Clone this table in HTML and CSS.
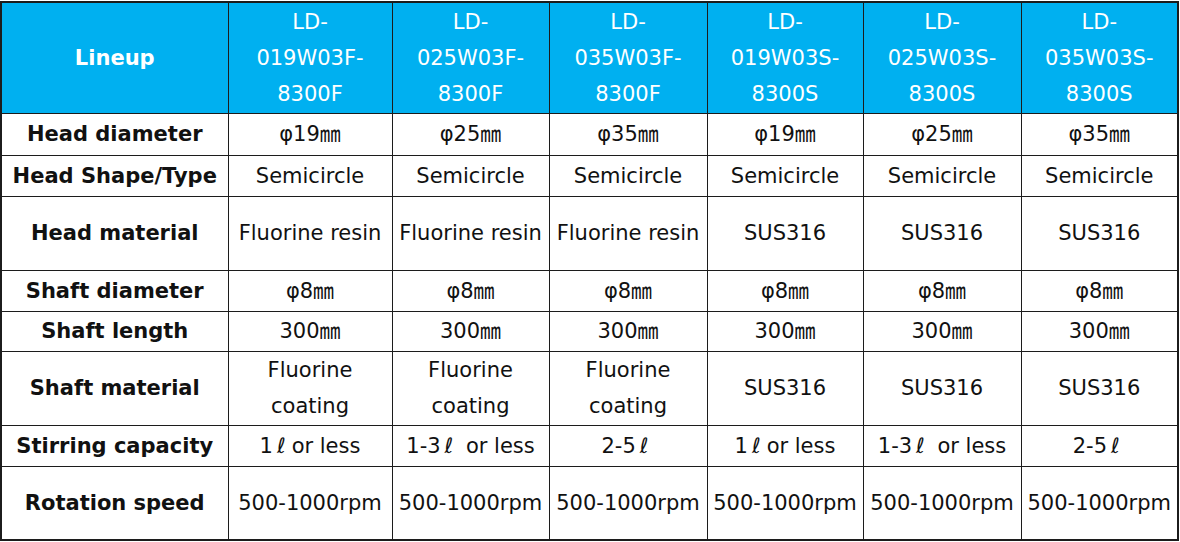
FILE: index.html
```
<!DOCTYPE html>
<html lang="en">
<head>
    <meta charset="UTF-8">
    <meta name="viewport" content="width=device-width, initial-scale=1.0">
    <title>Lineup</title>
    <link rel="stylesheet" href="styles.css">
</head>
<body>
    <table class="spec">
        <colgroup>
            <col class="c-label">
            <col class="c-1">
            <col class="c-2">
            <col class="c-3">
            <col class="c-4">
            <col class="c-5">
            <col class="c-6">
        </colgroup>
        <tr class="head">
            <th class="label">Lineup</th>
            <th>LD-<br>019W03F-<br>8300F</th>
            <th>LD-<br>025W03F-<br>8300F</th>
            <th>LD-<br>035W03F-<br>8300F</th>
            <th>LD-<br>019W03S-<br>8300S</th>
            <th>LD-<br>025W03S-<br>8300S</th>
            <th>LD-<br>035W03S-<br>8300S</th>
        </tr>
        <tr class="r-42">
            <td class="label">Head diameter</td>
            <td>φ19㎜</td>
            <td>φ25㎜</td>
            <td>φ35㎜</td>
            <td>φ19㎜</td>
            <td>φ25㎜</td>
            <td>φ35㎜</td>
        </tr>
        <tr class="r-41">
            <td class="label">Head Shape/Type</td>
            <td>Semicircle</td>
            <td>Semicircle</td>
            <td>Semicircle</td>
            <td>Semicircle</td>
            <td>Semicircle</td>
            <td>Semicircle</td>
        </tr>
        <tr class="r-74">
            <td class="label">Head material</td>
            <td>Fluorine resin</td>
            <td>Fluorine resin</td>
            <td>Fluorine resin</td>
            <td>SUS316</td>
            <td>SUS316</td>
            <td>SUS316</td>
        </tr>
        <tr class="r-41">
            <td class="label">Shaft diameter</td>
            <td>φ8㎜</td>
            <td>φ8㎜</td>
            <td>φ8㎜</td>
            <td>φ8㎜</td>
            <td>φ8㎜</td>
            <td>φ8㎜</td>
        </tr>
        <tr class="r-40">
            <td class="label">Shaft length</td>
            <td>300㎜</td>
            <td>300㎜</td>
            <td>300㎜</td>
            <td>300㎜</td>
            <td>300㎜</td>
            <td>300㎜</td>
        </tr>
        <tr class="r-74">
            <td class="label">Shaft material</td>
            <td>Fluorine<br>coating</td>
            <td>Fluorine<br>coating</td>
            <td>Fluorine<br>coating</td>
            <td>SUS316</td>
            <td>SUS316</td>
            <td>SUS316</td>
        </tr>
        <tr class="r-41">
            <td class="label">Stirring capacity</td>
            <td>1<span class="ltr">ℓ</span>or less</td>
            <td>1-3<span class="ltr">ℓ</span>&nbsp;or less</td>
            <td>2-5<span class="ltr">ℓ</span></td>
            <td>1<span class="ltr">ℓ</span>or less</td>
            <td>1-3<span class="ltr">ℓ</span>&nbsp;or less</td>
            <td>2-5<span class="ltr">ℓ</span></td>
        </tr>
        <tr class="r-74">
            <td class="label">Rotation speed</td>
            <td>500-1000rpm</td>
            <td>500-1000rpm</td>
            <td>500-1000rpm</td>
            <td>500-1000rpm</td>
            <td>500-1000rpm</td>
            <td>500-1000rpm</td>
        </tr>
    </table>
</body>
</html>
```

FILE: styles.css
```
body {
    margin: 0;
    padding: 1px 0 0 0;
    background-color: white;
    font-family: "DejaVu Sans", "Noto Sans CJK JP", sans-serif;
}

.spec {
    width: 1177px;
    table-layout: fixed;
    border-collapse: collapse;
    border: 2px solid #1c1c1c;
    color: #111;
    font-size: 21px;
    line-height: 36px;
}

.c-label { width: 227px; }
.c-1 { width: 164px; }
.c-2 { width: 157px; }
.c-3 { width: 158px; }
.c-4 { width: 156px; }
.c-5 { width: 158px; }
.c-6 { width: 157px; }

.spec th,
.spec td {
    border: 1px solid #1c1c1c;
    padding: 0;
    text-align: center;
    vertical-align: middle;
    white-space: nowrap;
    overflow: hidden;
}

.spec th {
    font-weight: normal;
}

.head {
    height: 111px;
    background-color: #00b0f0;
    color: white;
}

.spec .label {
    font-weight: bold;
}

.r-40 { height: 40px; }
.r-41 { height: 41px; }
.r-42 { height: 42px; }
.r-74 { height: 74px; }

.ltr {
    padding: 0 6px 0 4px;
}
```
